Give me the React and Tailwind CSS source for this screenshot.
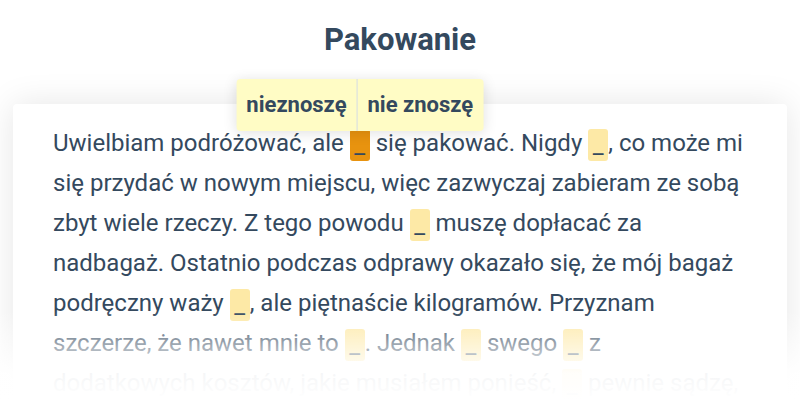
import React from 'react';

const font = { fontFamily: 'Roboto, "Noto Sans", sans-serif' };

function Blank({ active, children }) {
    return (
        <span
            className={
                'relative inline-block w-5 h-8 align-middle rounded-[3px] text-center leading-8 ' +
                (active ? 'bg-[#e8930f]' : 'bg-[#fde9a6]')
            }
        >
            _
            {children}
        </span>
    );
}

function Choices() {
    return (
        <div className="absolute bottom-full left-1/2 -translate-x-1/2 -mb-0.5 flex bg-[#fffcc5] rounded shadow-[0_2px_14px_rgba(0,0,0,0.12)] whitespace-nowrap z-10">
            <button className="h-[52px] px-2.5 text-[22px] font-bold text-[#34495e] leading-none">nieznoszę</button>
            <div className="w-px bg-[#d5dbe4]" />
            <button className="h-[52px] px-2.5 text-[22px] font-bold text-[#34495e] leading-none">nie znoszę</button>
        </div>
    );
}

export default function App() {
    return (
        <div className="relative w-[800px] h-[400px] overflow-hidden bg-white" style={font}>
            <h1 className="pt-[22px] text-center text-[31px] font-bold text-[#34495e] leading-9">Pakowanie</h1>

            <div className="mx-[13px] mt-[46px] bg-white rounded shadow-[0_0_34px_rgba(0,0,0,0.1)] px-10 pt-[19px] pb-10">
                <p className="text-2xl leading-10 text-[#34495e]">
                    Uwielbiam podróżować, ale{' '}
                    <Blank active>
                        <Choices />
                    </Blank>{' '}
                    się pakować. Nigdy <Blank />, co może mi się przydać w nowym miejscu, więc zazwyczaj zabieram ze sobą
                    zbyt wiele rzeczy. Z tego powodu <Blank /> muszę dopłacać za nadbagaż. Ostatnio podczas odprawy okazało
                    się, że mój bagaż podręczny waży <Blank />, ale piętnaście kilogramów. Przyznam szczerze, że nawet mnie
                    to <Blank />. Jednak <Blank /> swego <Blank /> z dodatkowych kosztów, jakie musiałem ponieść, <Blank />{' '}
                    pewnie sądzę, że to wszystko było konieczne.
                </p>
            </div>

            {/* fade out */}
            <div className="absolute left-0 right-0 bottom-0 h-[90px] bg-gradient-to-b from-white/0 via-white/95 via-70% to-white pointer-events-none" />
        </div>
    );
}
